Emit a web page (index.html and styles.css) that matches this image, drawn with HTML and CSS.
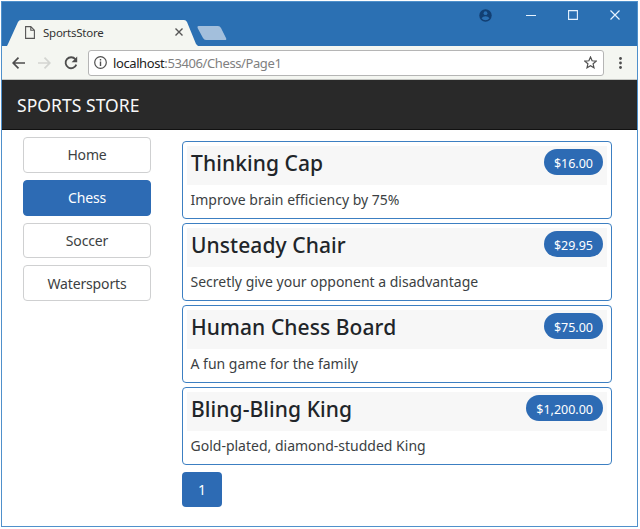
FILE: index.html
```html
<!DOCTYPE html>
<html lang="en">
<head>
<meta charset="utf-8">
<title>SportsStore</title>
<link rel="stylesheet" href="styles.css">
</head>
<body>
<div class="window">
  <header class="titlebar">
    <div class="tab">
      <svg class="tab-shape" width="191" height="26" viewBox="0 0 191 26"><path d="M0 26 L1 24 L11 2 Q12 0 14 0 H177 Q179 0 180 2 L189 24 L191 26Z" fill="#f4f6f1"/></svg>
      <svg class="file-icon" width="10" height="13" viewBox="0 0 10 13" fill="none" stroke="#555" stroke-width="1.1"><path d="M.6.6H5.8L9.4 4.2V12.4H.6ZM5.8.6V4.2H9.4"/></svg>
      <span class="tab-title">SportsStore</span>
      <svg class="tab-close" width="8" height="8" viewBox="0 0 8 8" stroke="#555" stroke-width="1.4"><path d="M.5.5 7.5 7.5M7.5.5.5 7.5"/></svg>
    </div>
    <svg class="new-tab" width="30" height="14" viewBox="0 0 30 14"><path d="M1.5 0H21Q23 0 24 2L29 12Q30 14 28 14H9Q7 14 6 12L.6 2Q0 0 1.5 0Z" fill="#a3bfdc"/></svg>
    <div class="controls">
      <svg width="13" height="13" viewBox="0 0 13 13"><circle cx="6.5" cy="6.5" r="6.2" fill="#123f73"/><circle cx="6.5" cy="4.2" r="1.9" fill="#2b70b3"/><path d="M2.5 9.2Q4 7.2 6.5 7.2T10.5 9.2Q9 11.2 6.5 11.2T2.5 9.2Z" fill="#2b70b3"/></svg>
      <svg width="10" height="10" viewBox="0 0 10 10" stroke="#e6f3ff"><path d="M0 5.5H10"/></svg>
      <svg width="10" height="10" viewBox="0 0 10 10" fill="none" stroke="#e6f3ff" stroke-width="1.1"><path d="M.6.6H9.4V9.4H.6Z"/></svg>
      <svg width="10" height="10" viewBox="0 0 10 10" stroke="#e6f3ff" stroke-width="1.2"><path d="M.5.5 9.5 9.5M9.5.5.5 9.5"/></svg>
    </div>
  </header>
  <div class="toolbar">
    <svg width="13" height="12" viewBox="0 0 13 12" fill="none" stroke="#4d4d4d" stroke-width="1.7"><path d="M13 6H1.5M6.5.7 1.2 6 6.5 11.3"/></svg>
    <svg width="13" height="12" viewBox="0 0 13 12" fill="none" stroke="#d3d5d1" stroke-width="1.7"><path d="M0 6H11.5M6.5.7 11.8 6 6.5 11.3"/></svg>
    <svg width="14" height="14" viewBox="0 0 14 14"><path d="M11.4 3.3A5.5 5.5 0 1 0 12.3 8.6" fill="none" stroke="#4d4d4d" stroke-width="1.8"/><path d="M13.2.6V6.2H7.6Z" fill="#4d4d4d"/></svg>
    <div class="address">
      <svg width="13" height="13" viewBox="0 0 13 13"><circle cx="6.5" cy="6.5" r="5.8" fill="none" stroke="#505050" stroke-width="1.2"/><path d="M5.8 2.9H7.2V4.4H5.8ZM5.8 5.6H7.2V10H5.8Z" fill="#505050"/></svg>
      <span class="url"><span class="host">localhost</span>:53406/Chess/Page1</span>
      <svg width="13" height="13" viewBox="0 0 13 13" fill="none" stroke="#505050" stroke-width="1.2"><path d="M6.5 1 8.1 4.8 12.2 5.1 9.1 7.8 10 11.8 6.5 9.7 3 11.8 3.9 7.8.8 5.1 4.9 4.8Z"/></svg>
    </div>
    <svg class="dots" width="3" height="12" viewBox="0 0 3 12" fill="#4d4d4d"><circle cx="1.5" cy="1.5" r="1.4"/><circle cx="1.5" cy="6" r="1.4"/><circle cx="1.5" cy="10.5" r="1.4"/></svg>
  </div>
  <div class="navbar"><span class="brand">SPORTS STORE</span></div>
  <main class="page">
    <nav class="categories">
      <a class="btn">Home</a>
      <a class="btn active">Chess</a>
      <a class="btn">Soccer</a>
      <a class="btn">Watersports</a>
    </nav>
    <section class="products">
      <article class="card">
        <div class="card-head"><h4>Thinking Cap</h4><span class="pill">$16.00</span></div>
        <p>Improve brain efficiency by 75%</p>
      </article>
      <article class="card">
        <div class="card-head"><h4>Unsteady Chair</h4><span class="pill">$29.95</span></div>
        <p>Secretly give your opponent a disadvantage</p>
      </article>
      <article class="card">
        <div class="card-head"><h4>Human Chess Board</h4><span class="pill">$75.00</span></div>
        <p>A fun game for the family</p>
      </article>
      <article class="card">
        <div class="card-head"><h4>Bling-Bling King</h4><span class="pill">$1,200.00</span></div>
        <p>Gold-plated, diamond-studded King</p>
      </article>
      <a class="page-link">1</a>
    </section>
  </main>
</div>
</body>
</html>
```
FILE: styles.css
```css
* { box-sizing: border-box; }
body {
  margin: 0;
  background: #fff;
  font-family: "Noto Sans", "Open Sans", sans-serif;
  font-size: 14px;
  color: #3c3f43;
}
svg { display: block; flex: none; }
.window {
  width: 637px;
  height: 526px;
  margin: 1px 0 0 1px;
  border: 1px solid #4f90cb;
  background: #fff;
}
.titlebar {
  display: flex;
  height: 44px;
  padding: 18px 0 0 5px;
  background: #2b70b3;
}
.tab {
  position: relative;
  display: flex;
  align-items: center;
  width: 191px;
  height: 26px;
  padding: 0 15px 2px 18px;
}
.tab-shape { position: absolute; left: 0; top: 0; }
.file-icon, .tab-title, .tab-close { position: relative; }
.tab-title {
  margin-left: 8px;
  font-size: 11.5px;
  letter-spacing: -0.25px;
  color: #333;
}
.tab-close { margin-left: auto; }
.new-tab { margin: 6px 0 0 -1px; }
.controls {
  display: flex;
  align-items: center;
  gap: 32px;
  height: 14px;
  margin: -12px 17px 0 auto;
}
.controls svg:first-child { margin-right: 2px; }
.toolbar {
  display: flex;
  align-items: center;
  height: 34px;
  padding: 0 15px 0 10px;
  background: #f4f6f1;
  border-bottom: 1px solid #c5c7c3;
}
.toolbar > svg + svg { margin-left: 13px; }
.address {
  display: flex;
  align-items: center;
  flex: 1;
  height: 26px;
  margin: 0 15px 0 10px;
  padding: 0 6px 0 5px;
  border: 1px solid #b5b5b5;
  border-radius: 3px;
  background: #fff;
}
.url {
  flex: 1;
  margin-left: 6px;
  font-size: 13px;
  letter-spacing: -0.4px;
  color: #808080;
}
.host { color: #222; }
.navbar {
  display: flex;
  align-items: center;
  height: 50px;
  padding: 0 15px;
  background: #292929;
  border-bottom: 1px solid #111;
}
.brand {
  font-size: 17.5px;
  letter-spacing: 0.05px;
  color: #f8f8f8;
}
.page {
  display: flex;
  gap: 31px;
  padding: 7px 0 0 21px;
}
.categories {
  display: flex;
  flex-direction: column;
  gap: 7px;
  width: 128px;
}
.btn {
  display: flex;
  align-items: center;
  justify-content: center;
  height: 35.8px;
  border: 1px solid #cfd0d1;
  border-radius: 4px;
  letter-spacing: -0.15px;
}
.btn.active {
  background: #2d6bb4;
  border-color: #2d6bb4;
  color: #fff;
}
.products {
  display: flex;
  flex-direction: column;
  align-items: flex-start;
  width: 430px;
  margin-top: 4px;
}
.card {
  width: 100%;
  height: 78px;
  margin-bottom: 4px;
  padding: 4px;
  border: 1px solid #3c7fc2;
  border-radius: 4px;
}
.card-head {
  display: flex;
  justify-content: space-between;
  align-items: flex-start;
  height: 39px;
  padding: 3px 4px 0 4px;
  background: #f7f7f7;
}
h4 {
  margin: 1px 0 0;
  font-size: 21px;
  line-height: 26px;
  letter-spacing: 0.08px;
  font-weight: 500;
  color: #212529;
}
.pill {
  height: 26px;
  padding: 2px 10px 0;
  border-radius: 13px;
  background: #2d6bb4;
  color: #fff;
  font-size: 12.5px;
  line-height: 26px;
}
.card p {
  margin: 5px 0 0 3.5px;
  line-height: 20px;
}
.page-link {
  display: flex;
  align-items: center;
  justify-content: center;
  width: 40px;
  height: 35px;
  margin-top: 3px;
  border-radius: 4px;
  background: #2d6bb4;
  color: #fff;
}
```
